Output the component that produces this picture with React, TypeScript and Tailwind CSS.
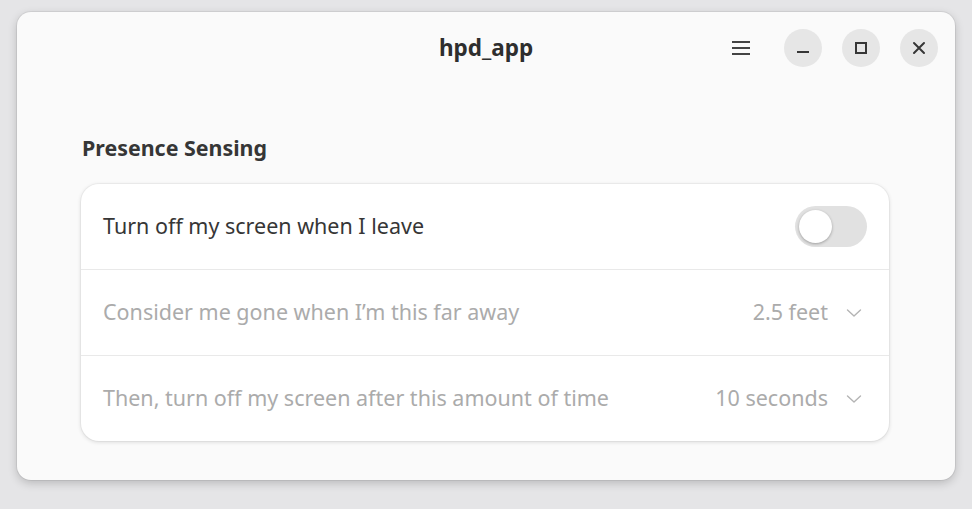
import React from "react";

function Chevron() {
  return (
    <svg width="16" height="10" viewBox="0 0 16 10" fill="none" className="text-[#b4b4b4]">
      <path d="M1.5 2 L8 8 L14.5 2" stroke="currentColor" strokeWidth="1.4" strokeLinecap="round" strokeLinejoin="round" />
    </svg>
  );
}

function WindowButton({ children }: { children: React.ReactNode }) {
  return (
    <button className="flex h-[38px] w-[38px] items-center justify-center rounded-full bg-[#e6e6e6] text-[#363636]">
      {children}
    </button>
  );
}

function Row({
  label,
  value,
  last,
}: {
  label: string;
  value: string;
  last?: boolean;
}) {
  return (
    <div
      className={
        "flex items-center justify-between pl-[22px] pr-[27px] " +
        (last ? "h-[85px]" : "h-[86px] border-b border-[#e9e9e9]")
      }
    >
      <span className="text-[#ababab]">{label}</span>
      <div className="flex items-center gap-[18px]">
        <span className="text-[#ababab]">{value}</span>
        <Chevron />
      </div>
    </div>
  );
}

export default function App() {
  return (
    <div
      className="h-[509px] w-[972px] bg-[#e5e5e7] pl-[17px] pt-[12px]"
      style={{ fontFamily: '"Noto Sans", "Open Sans", sans-serif' }}
    >
      <div className="flex h-[468px] w-[938px] flex-col rounded-[14px] bg-[#fafafa] shadow-[0_3px_10px_rgba(0,0,0,0.2),0_0_0_1px_rgba(0,0,0,0.06)]">
        {/* header bar */}
        <header className="relative flex h-[72px] items-center justify-end pr-[17px]">
          <h1 className="absolute left-1/2 -translate-x-1/2 text-[22.5px] font-bold text-[#2e2e2e]">
            hpd_app
          </h1>
          <button className="mr-[24px] flex h-[38px] w-[38px] items-center justify-center">
            <svg width="18" height="16" viewBox="0 0 18 16">
              <rect x="0" y="1" width="18" height="2" fill="#444" />
              <rect x="0" y="7" width="18" height="2" fill="#444" />
              <rect x="0" y="13" width="18" height="2" fill="#444" />
            </svg>
          </button>
          <div className="flex items-center gap-[20px]">
            <WindowButton>
              <svg width="14" height="14" viewBox="0 0 14 14">
                <rect x="1" y="10" width="12" height="2" fill="currentColor" />
              </svg>
            </WindowButton>
            <WindowButton>
              <svg width="14" height="14" viewBox="0 0 14 14">
                <rect x="2" y="2" width="10" height="10" fill="none" stroke="currentColor" strokeWidth="2" />
              </svg>
            </WindowButton>
            <WindowButton>
              <svg width="14" height="14" viewBox="0 0 14 14">
                <path d="M2 2 L12 12 M12 2 L2 12" stroke="currentColor" strokeWidth="2" strokeLinecap="round" />
              </svg>
            </WindowButton>
          </div>
        </header>

        {/* content */}
        <main className="px-[64px] pt-[50px]">
          <h2 className="pl-[1px] text-[21.4px] leading-[28px] font-bold text-[#363636]">
            Presence Sensing
          </h2>
          <div className="mt-[22px] w-[808px] rounded-[18px] bg-white text-[21.5px] shadow-[0_1px_4px_rgba(0,0,0,0.14),0_0_0_1px_rgba(0,0,0,0.03)]">
            <div className="flex h-[86px] items-center justify-between border-b border-[#e9e9e9] pl-[22px] pr-[22px]">
              <span className="text-[#363636]">Turn off my screen when I leave</span>
              <div className="flex h-[41px] w-[72px] items-center rounded-full bg-[#e1e1e1] px-[4px]">
                <div className="h-[33px] w-[33px] rounded-full bg-white shadow-[0_1px_3px_rgba(0,0,0,0.3)]" />
              </div>
            </div>
            <Row label="Consider me gone when I’m this far away" value="2.5 feet" />
            <Row label="Then, turn off my screen after this amount of time" value="10 seconds" last />
          </div>
        </main>
      </div>
    </div>
  );
}
